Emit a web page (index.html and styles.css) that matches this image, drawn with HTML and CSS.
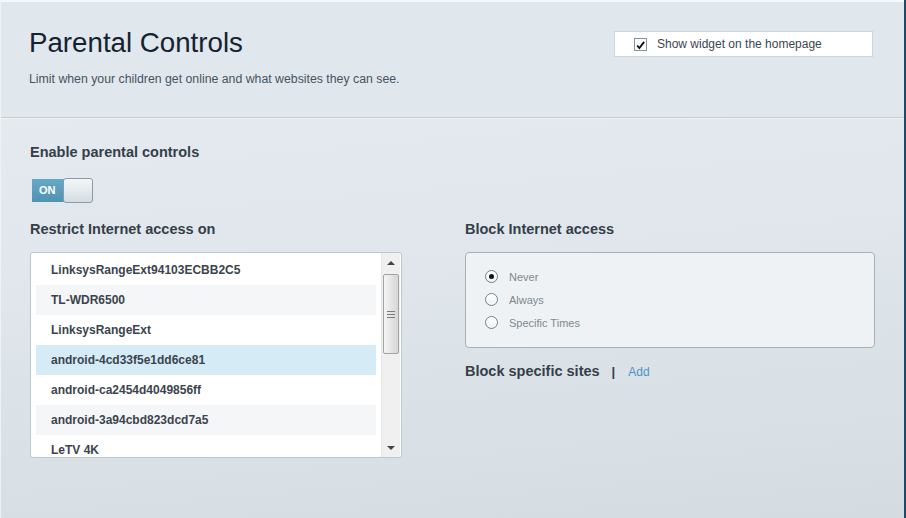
FILE: index.html
```html
<!DOCTYPE html>
<html lang="en">
  <head>
    <meta charset="UTF-8" />
    <meta name="viewport" content="width=device-width, initial-scale=1.0" />
    <title>Parental Controls</title>
    <link rel="stylesheet" href="styles.css">
  </head>
  <body>
    <div class="page">
      <header class="head">
        <div class="head_text">
          <h1>Parental Controls</h1>
          <p>Limit when your children get online and what websites they can see.</p>
        </div>
        <label class="widget_box">
          <span class="check">
            <svg width="13" height="13" viewBox="0 0 13 13">
              <path d="M2.5 6.5 L5.2 9.6 L10.8 2.2" fill="none" stroke="#111" stroke-width="2.2" />
            </svg>
          </span>
          Show widget on the homepage
        </label>
      </header>

      <main class="main">
        <h2>Enable parental controls</h2>
        <div class="toggle">
          <span class="toggle_on">ON</span>
          <span class="toggle_knob"></span>
        </div>

        <div class="columns">
          <section class="col_left">
            <h2>Restrict Internet access on</h2>
            <div class="device_list">
              <ul class="devices">
                <li>LinksysRangeExt94103ECBB2C5</li>
                <li class="alt">TL-WDR6500</li>
                <li>LinksysRangeExt</li>
                <li class="selected">android-4cd33f5e1dd6ce81</li>
                <li>android-ca2454d4049856ff</li>
                <li class="alt">android-3a94cbd823dcd7a5</li>
                <li>LeTV 4K</li>
              </ul>
              <div class="scrollbar">
                <span class="arrow up"></span>
                <div class="track">
                  <div class="thumb"><span class="grip"></span></div>
                </div>
                <span class="arrow down"></span>
              </div>
            </div>
          </section>

          <section class="col_right">
            <h2>Block Internet access</h2>
            <div class="radio_box">
              <label class="radio_row"><span class="radio checked"></span>Never</label>
              <label class="radio_row"><span class="radio"></span>Always</label>
              <label class="radio_row"><span class="radio"></span>Specific Times</label>
            </div>
            <div class="sites">
              <h2>Block specific sites</h2>
              <span class="sep">|</span>
              <a href="#" class="add">Add</a>
            </div>
          </section>
        </div>
      </main>
    </div>
  </body>
</html>
```

FILE: styles.css
```css
*,
*::before,
*::after {
  box-sizing: border-box;
}
html,
body {
  margin: 0;
  padding: 0;
}
body {
  font-family: "Liberation Sans", Arial, sans-serif;
  width: 906px;
  height: 518px;
  overflow: hidden;
  background: #dfe6eb;
}

.page {
  width: 906px;
  height: 518px;
  border-right: 2px solid #1b4a6c;
  border-left: 1px solid #eef2f5;
  display: flex;
  flex-direction: column;
  background: linear-gradient(175deg, #e6ecf0 0%, #e1e7ec 45%, #d4dce2 100%);
}

.head {
  height: 118px;
  display: flex;
  justify-content: space-between;
  padding: 25px 31px 0 28px;
  background: #e0e8ee;
  border-top: 2px solid #f6f9fb;
  border-bottom: 1px solid #c3cbd1;
  box-shadow: 0 1px 0 #f0f4f6;
}
.head h1 {
  margin: 0;
  font-size: 27.7px;
  line-height: 32px;
  font-weight: normal;
  color: #152230;
}
.head p {
  margin: 12px 0 0;
  font-size: 12.3px;
  line-height: 16px;
  color: #48535e;
}

.widget_box {
  margin-top: 4px;
  width: 259px;
  height: 26px;
  display: flex;
  align-items: center;
  gap: 10px;
  padding-left: 19px;
  background: #fff;
  border: 1px solid #cdd6dc;
  font-size: 12px;
  color: #3c4650;
}
.check {
  width: 13px;
  height: 13px;
  border: 1px solid #7e95a8;
  background: #fff;
  display: flex;
}

.main {
  flex: 1;
  padding: 25px 29px 0 29px;
}
h2 {
  margin: 0;
  font-size: 14.5px;
  line-height: 18px;
  font-weight: bold;
  color: #343f49;
}

.toggle {
  margin: 17px 0 0 2px;
  display: flex;
  width: 62px;
  height: 25px;
}
.toggle_on {
  width: 32px;
  height: 23px;
  margin-top: 1px;
  background: linear-gradient(#66a8c7, #4f93b5);
  color: #fff;
  font-size: 11px;
  font-weight: bold;
  line-height: 23px;
  padding-left: 7px;
}
.toggle_knob {
  width: 30px;
  height: 25px;
  margin-left: -1px;
  border: 1px solid #8b9aa4;
  border-radius: 3px;
  background: linear-gradient(#f3f6f8, #d5dde2);
}

.columns {
  margin-top: 17px;
  display: flex;
  gap: 63px;
}
.col_left {
  width: 372px;
  flex: none;
}
.col_right {
  width: 410px;
  flex: none;
}

.device_list {
  margin-top: 14px;
  height: 206px;
  display: flex;
  background: #fff;
  border: 1px solid #bfc7cd;
  border-radius: 3px;
  overflow: hidden;
}
.devices {
  flex: 1;
  margin: 0;
  padding: 2px 5px 0 5px;
  list-style: none;
}
.devices li {
  height: 30px;
  line-height: 30px;
  padding-left: 15px;
  font-size: 12px;
  font-weight: bold;
  color: #3b444e;
  white-space: nowrap;
}
.devices li.alt {
  background: #f5f6f7;
}
.devices li.selected {
  background: #d5ecf7;
}

.scrollbar {
  width: 19px;
  margin: 0 1px 0 0;
  display: flex;
  flex-direction: column;
  background: #f0f0f0;
  border-left: 1px solid #e6e6e6;
}
.arrow {
  height: 19px;
  display: flex;
  align-items: center;
  justify-content: center;
}
.arrow::before {
  content: "";
  border-left: 4px solid transparent;
  border-right: 4px solid transparent;
}
.arrow.up::before {
  border-bottom: 4px solid #444;
}
.arrow.down::before {
  border-top: 4px solid #444;
}
.track {
  flex: 1;
}
.thumb {
  margin: 2px 1px 0;
  height: 80px;
  border: 1px solid #a3a3a3;
  border-radius: 2px;
  background: linear-gradient(90deg, #f4f4f4, #e2e2e2 60%, #d6d6d6);
  display: flex;
  align-items: center;
  justify-content: center;
}
.grip {
  width: 8px;
  height: 7px;
  border-top: 1px solid #7a7a7a;
  border-bottom: 1px solid #7a7a7a;
  background: linear-gradient(#7a7a7a, #7a7a7a) center / 8px 1px no-repeat;
}

.radio_box {
  margin-top: 14px;
  height: 96px;
  padding: 12px 0 0 19px;
  background: #eef2f5;
  border: 1px solid #a7b0b7;
  border-radius: 4px;
}
.radio_row {
  display: flex;
  align-items: center;
  height: 23px;
  gap: 11px;
  font-size: 11px;
  color: #80888e;
}
.radio {
  width: 13px;
  height: 13px;
  border-radius: 50%;
  border: 1px solid #6f8290;
  background: linear-gradient(#ffffff, #eef2f4);
  display: flex;
  align-items: center;
  justify-content: center;
}
.radio.checked::before {
  content: "";
  width: 5px;
  height: 5px;
  border-radius: 50%;
  background: #111;
}

.sites {
  margin-top: 14px;
  display: flex;
  align-items: baseline;
}
.sep {
  margin-left: 12px;
  font-size: 13px;
  color: #343f49;
  font-weight: bold;
}
.add {
  margin-left: 13px;
  font-size: 12px;
  color: #4b93c3;
  text-decoration: none;
}
```
